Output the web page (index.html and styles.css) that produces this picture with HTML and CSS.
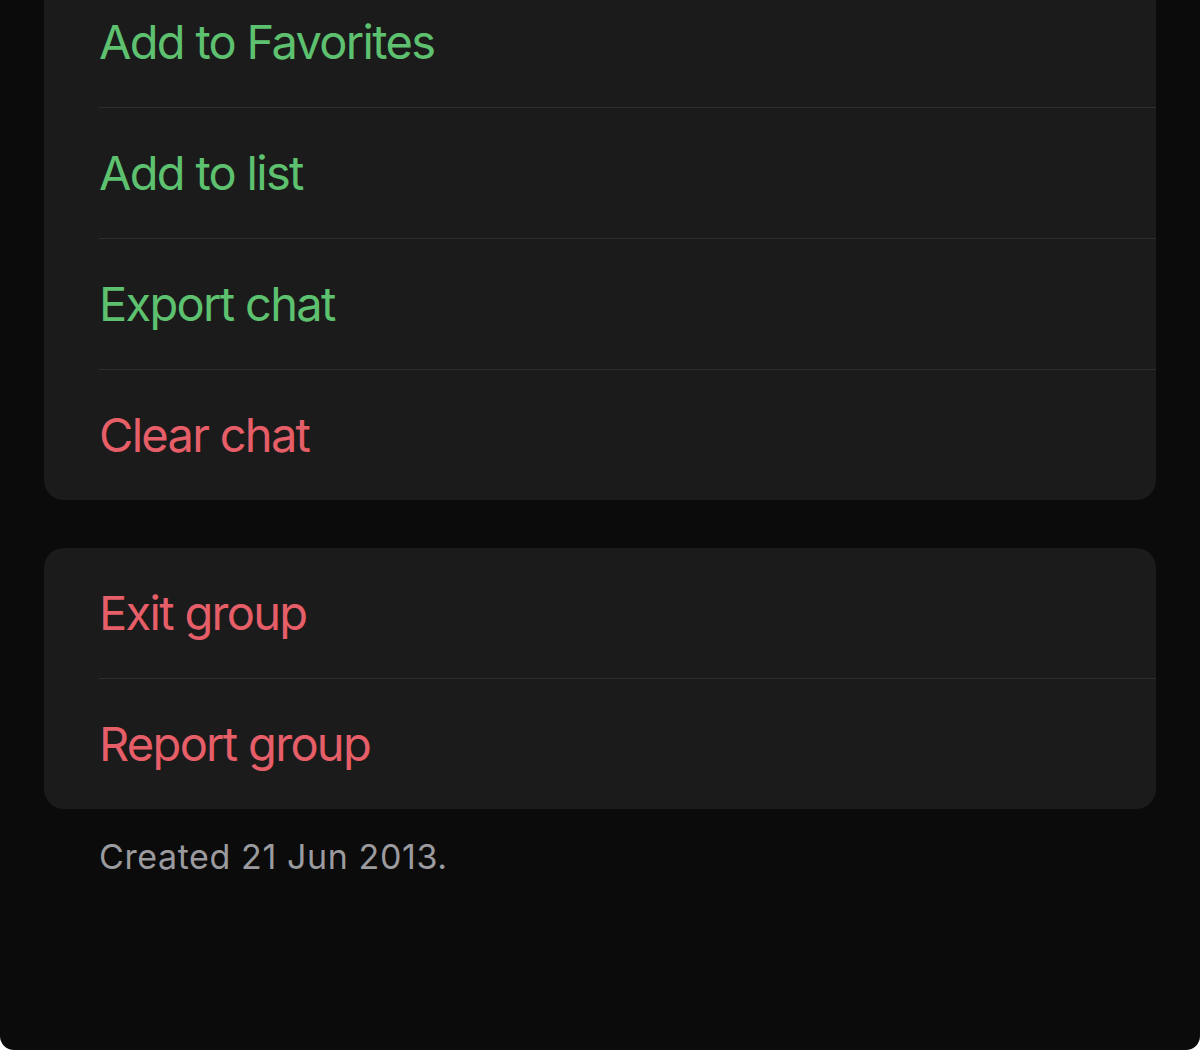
FILE: index.html
```html
<!DOCTYPE html>
<html lang="en">
<head>
<meta charset="utf-8">
<title>Group info</title>
<link rel="stylesheet" href="styles.css">
</head>
<body>
<div class="screen">
  <div class="group group-first">
    <div class="row"><span class="label green">Add to Favorites</span></div>
    <div class="row"><span class="label green">Add to list</span></div>
    <div class="row"><span class="label green">Export chat</span></div>
    <div class="row"><span class="label red">Clear chat</span></div>
  </div>
  <div class="group">
    <div class="row"><span class="label red">Exit group</span></div>
    <div class="row"><span class="label red">Report group</span></div>
  </div>
  <p class="footer">Created 21 Jun 2013.</p>
</div>
</body>
</html>
```
FILE: styles.css
```css
html, body {
  margin: 0;
  padding: 0;
  background: #ffffff;
}
body {
  font-family: Inter, "Liberation Sans", sans-serif;
}
.screen {
  width: 1200px;
  height: 1050px;
  background: #0b0b0b;
  border-radius: 0 0 14px 14px;
  overflow: hidden;
  padding: 0 44px;
  box-sizing: border-box;
  display: flex;
  flex-direction: column;
}
.group {
  background: #1b1b1c;
  border-radius: 20px;
  overflow: hidden;
  display: flex;
  flex-direction: column;
  padding-left: 55px;
  margin-bottom: 48px;
}
.group-first {
  margin-top: -23px;
}
.row {
  height: 131px;
  display: flex;
  align-items: center;
  box-sizing: border-box;
  border-bottom: 1px solid #2e2e30;
}
.group .row:last-child {
  border-bottom: none;
  height: 130px;
}
.label {
  font-size: 47px;
  font-weight: 400;
  letter-spacing: -1.7px;
  margin-top: -2px;
}
.green { color: #5dc16f; }
.red { color: #e65e67; }
.footer {
  margin: -21px 0 0 55px;
  font-size: 34px;
  letter-spacing: 0.6px;
  color: #9b9b9f;
}
```
